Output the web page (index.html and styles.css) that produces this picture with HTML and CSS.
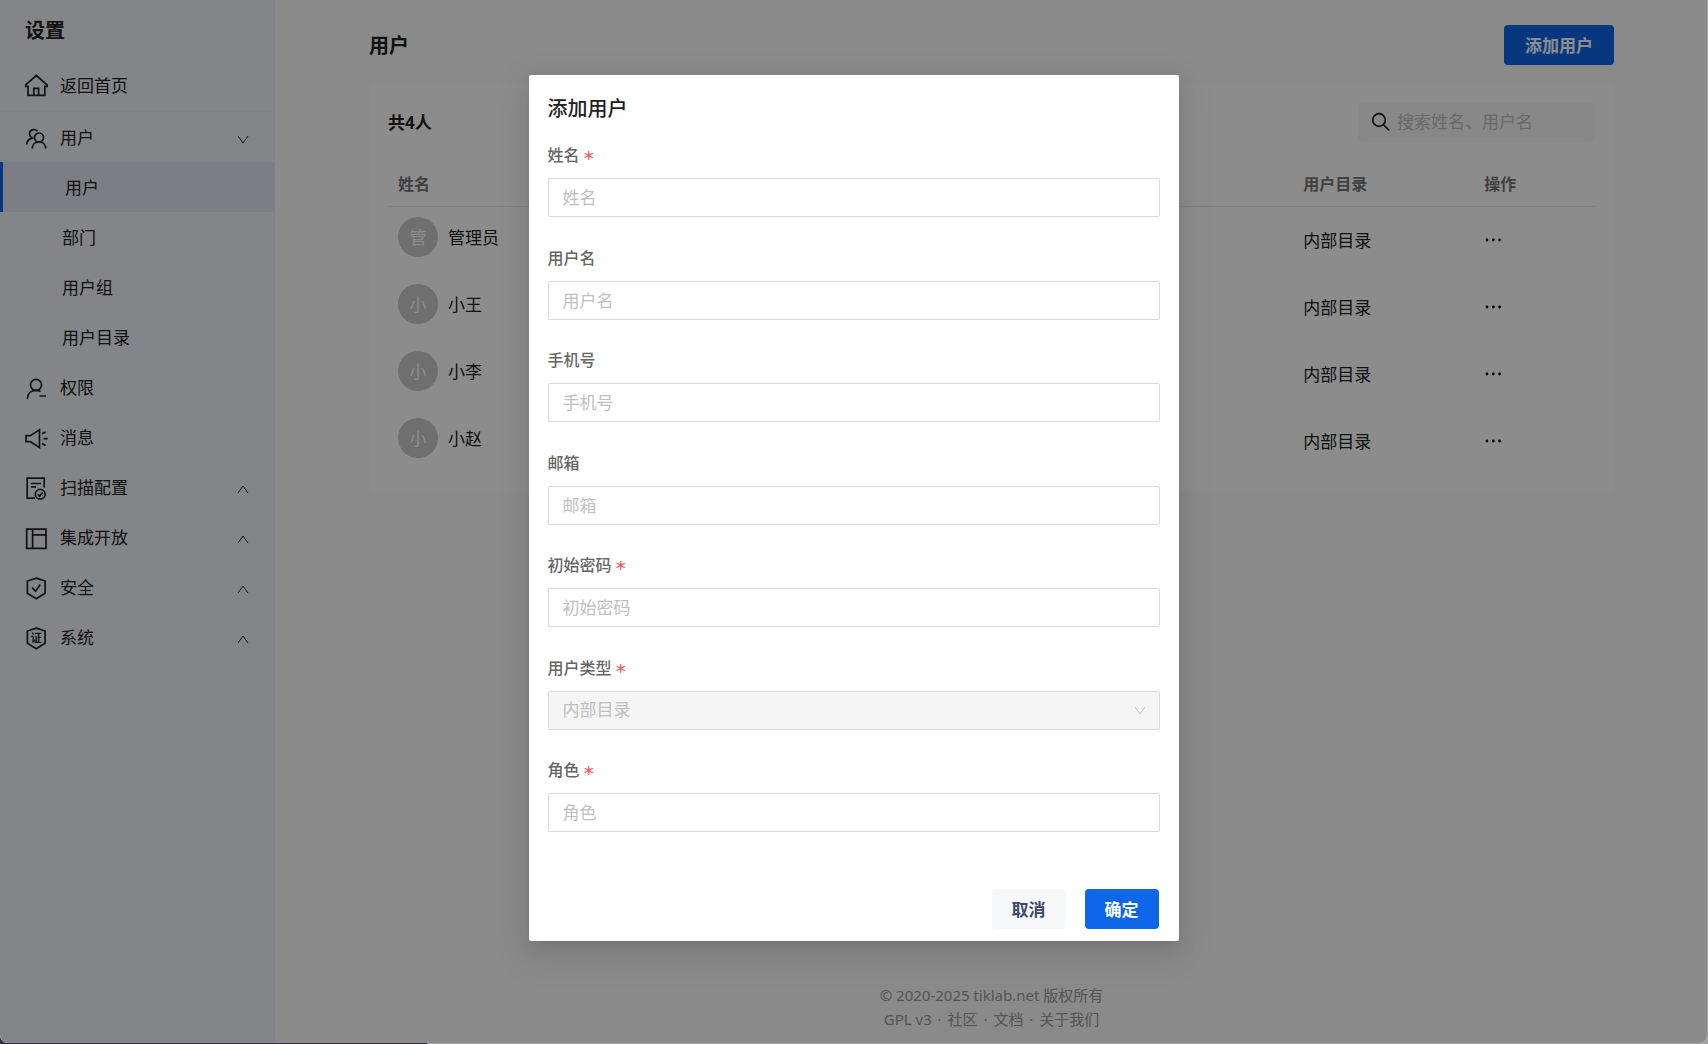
FILE: index.html
```html
<!DOCTYPE html>
<html lang="zh-CN">
<head>
<meta charset="utf-8">
<meta name="viewport" content="width=device-width, initial-scale=1">
<title>用户 - 设置</title>
<link rel="stylesheet" href="styles.css">
</head>
<body>
<svg class="sprite" aria-hidden="true">
  <symbol id="chevron-down" viewBox="0 0 12 12"><path d="M1 3l5 7 5-7"/></symbol>
  <symbol id="chevron-up" viewBox="0 0 12 12"><path d="M1 10l5-7 5 7"/></symbol>
  <symbol id="dots" viewBox="0 0 18 6"><circle cx="3" cy="3" r="1.4"/><circle cx="9.3" cy="3" r="1.4"/><circle cx="15.6" cy="3" r="1.4"/></symbol>
</svg>
<div class="app">
  <aside class="sidebar">
    <h2 class="sidebar-title">设置</h2>
    <nav>
      <a class="menu-item menu-home" href="#">
        <svg class="icon" viewBox="0 0 24 24"><path d="M4 21.400V12.400H1.700v-1.500L12.300 1.500l10.800 9.400v1.500h-2.300v9zM9.800 21.400v-7h4.800v7"/></svg>
        <span>返回首页</span>
      </a>
      <a class="menu-item" href="#">
        <svg class="icon" viewBox="0 0 24 24"><circle cx="15" cy="11.500" r="4.500"/><path d="M8.300 22.500c0-3.800 2.700-6.500 6.700-6.500s6.700 2.700 6.700 6.500M13.400 5.300C12.600 4 11 3.300 9.300 3.600 6.800 4 5.300 6.100 5.600 8.500c.2 1.700 1.200 2.900 2.700 3.600C4.800 13 2.800 15.200 2.700 18.500"/></svg>
        <span>用户</span>
        <svg class="chevron"><use href="#chevron-down"/></svg>
      </a>
      <a class="menu-item submenu-item active" href="#">用户</a>
      <a class="menu-item submenu-item" href="#">部门</a>
      <a class="menu-item submenu-item" href="#">用户组</a>
      <a class="menu-item submenu-item" href="#">用户目录</a>
      <a class="menu-item" href="#">
        <svg class="icon" viewBox="0 0 24 24"><circle cx="12" cy="8.900" r="5.500"/><path d="M3.400 22.700c.2-5 3.600-8.300 8.600-8.300 1.800 0 3.300.4 4.600 1.200M15.500 20H22"/></svg>
        <span>权限</span>
      </a>
      <a class="menu-item" href="#">
        <svg class="icon" viewBox="0 0 24 24"><path d="M2 9.600h4.300l9.200-5.700v17.500l-9.200-5.700H2zM18 7.800l3.600-1.900M19.500 12.700h4.200M18 17.400l3.600 2.100"/></svg>
        <span>消息</span>
      </a>
      <a class="menu-item" href="#">
        <svg class="icon" viewBox="0 0 24 24"><path d="M20.200 11.500V2.200H3.200v20h7.800M6.900 7.500h10.200M6.900 10.900h5.200"/><circle cx="16.200" cy="18.200" r="4.900"/><path d="M13.900 18.300l1.800 1.900 2.900-3.700"/></svg>
        <span>扫描配置</span>
        <svg class="chevron"><use href="#chevron-up"/></svg>
      </a>
      <a class="menu-item" href="#">
        <svg class="icon" viewBox="0 0 24 24"><path d="M2.700 3.200h19.300v19.100H2.700zM8.600 3.200v19.100M8.600 8.900H22"/></svg>
        <span>集成开放</span>
        <svg class="chevron"><use href="#chevron-up"/></svg>
      </a>
      <a class="menu-item" href="#">
        <svg class="icon" viewBox="0 0 24 24"><path d="M12.200 2.100l8.900 2.900v12.200l-8.900 5.500-8.800-5.500V5zM8.200 11.600l3.300 3.600 4.800-6.600"/></svg>
        <span>安全</span>
        <svg class="chevron"><use href="#chevron-up"/></svg>
      </a>
      <a class="menu-item" href="#">
        <svg class="icon" viewBox="0 0 24 24"><path d="M12.200 2.100l8.900 2.900v12.200l-8.900 5.500-8.800-5.500V5z"/><text class="icon-text" x="12.200" y="16">证</text></svg>
        <span>系统</span>
        <svg class="chevron"><use href="#chevron-up"/></svg>
      </a>
    </nav>
  </aside>

  <main class="main">
    <header class="page-header">
      <h1 class="page-title">用户</h1>
      <button class="button button-primary" type="button">添加用户</button>
    </header>
    <section class="card">
      <div class="card-bar">
        <strong class="count">共4人</strong>
        <label class="search">
          <svg class="search-icon" viewBox="0 0 20 20"><circle cx="8" cy="8" r="6.300"/><path d="M12.500 12.700l5.800 5.800"/></svg>
          <input class="search-input" type="text" placeholder="搜索姓名、用户名" aria-label="搜索姓名、用户名">
        </label>
      </div>
      <table class="users">
        <thead>
          <tr><th class="col-name">姓名</th><th class="col-dir">用户目录</th><th class="col-action">操作</th></tr>
        </thead>
        <tbody>
          <tr><td><div class="person"><span class="avatar">管</span>管理员</div></td><td>内部目录</td><td><button class="more" type="button" aria-label="操作"><svg><use href="#dots"/></svg></button></td></tr>
          <tr><td><div class="person"><span class="avatar">小</span>小王</div></td><td>内部目录</td><td><button class="more" type="button" aria-label="操作"><svg><use href="#dots"/></svg></button></td></tr>
          <tr><td><div class="person"><span class="avatar">小</span>小李</div></td><td>内部目录</td><td><button class="more" type="button" aria-label="操作"><svg><use href="#dots"/></svg></button></td></tr>
          <tr><td><div class="person"><span class="avatar">小</span>小赵</div></td><td>内部目录</td><td><button class="more" type="button" aria-label="操作"><svg><use href="#dots"/></svg></button></td></tr>
        </tbody>
      </table>
    </section>
    <footer class="footer">
      <div>© 2020-2025 tiklab.net 版权所有</div>
      <div class="footer-links"><a href="#">GPL v3</a> · <a href="#">社区</a> · <a href="#">文档</a> · <a href="#">关于我们</a></div>
    </footer>
  </main>

  <div class="mask">
    <div class="modal" role="dialog" aria-modal="true" aria-labelledby="modal-title">
      <h2 class="modal-title" id="modal-title">添加用户</h2>
      <form class="form" id="user-form">
        <div class="field"><label for="name">姓名 <span class="required">*</span></label><input class="control" id="name" type="text" placeholder="姓名"></div>
        <div class="field"><label for="account">用户名</label><input class="control" id="account" type="text" placeholder="用户名"></div>
        <div class="field"><label for="phone">手机号</label><input class="control" id="phone" type="text" placeholder="手机号"></div>
        <div class="field"><label for="mail">邮箱</label><input class="control" id="mail" type="text" placeholder="邮箱"></div>
        <div class="field"><label for="password">初始密码 <span class="required">*</span></label><input class="control" id="password" type="password" placeholder="初始密码"></div>
        <div class="field"><label for="type">用户类型 <span class="required">*</span></label>
          <div class="select"><select class="control" id="type" disabled><option>内部目录</option></select><svg class="chevron"><use href="#chevron-down"/></svg></div>
        </div>
        <div class="field"><label for="role">角色 <span class="required">*</span></label><input class="control" id="role" type="text" placeholder="角色"></div>
      </form>
      <div class="modal-footer">
        <button class="button button-plain" type="button">取消</button>
        <button class="button button-primary" type="submit" form="user-form">确定</button>
      </div>
    </div>
  </div>
</div>
</body>
</html>
```
FILE: styles.css
```css
* { box-sizing: border-box; }

html {
  background: linear-gradient(to right, #352f47 25%, #a3a5a4 25%);
}

body {
  margin: 0;
  padding: 0 1px 1px 0;
  font-family: "Noto Sans", "Noto Sans CJK SC", sans-serif;
  font-size: 17px;
  line-height: 26px;
  color: #212121;
}

h1, h2 { margin: 0; }
a { color: inherit; text-decoration: none; }
button, input, select { font: inherit; color: inherit; }
button { cursor: pointer; }

.sprite { position: absolute; width: 0; height: 0; }

.app {
  position: relative;
  display: flex;
  min-height: calc(100vh - 1px);
  overflow: hidden;
  border-radius: 0 0 8px 8px;
  background: #f9fcf9;
}

/* Sidebar */
.sidebar {
  flex: 0 0 275px;
  background: #f0f2f8;
  border-right: 1px solid #eaecf2;
}
.sidebar-title {
  padding: 2px 25px 0;
  font-size: 20px;
  font-weight: 700;
  line-height: 58px;
}
.menu-item {
  display: flex;
  align-items: center;
  gap: 12px;
  height: 50px;
  padding: 1px 25px 0 24px;
}
.menu-home {
  height: 52px;
  padding-top: 0;
  border-bottom: 1px solid #eaecf2;
}
.submenu-item { padding-left: 62px; }
.active {
  background: #e4e5ee;
  border-left: 3px solid #0d67e8;
}
.icon {
  width: 24px;
  height: 24px;
  fill: none;
  stroke: #212121;
  stroke-width: 1.7;
}
.icon-text {
  fill: #212121;
  stroke: none;
  font-size: 11px;
  font-weight: 700;
  text-anchor: middle;
}
.chevron {
  width: 12px;
  height: 12px;
  margin-left: auto;
  fill: none;
  stroke: currentColor;
}
.menu-item .chevron { margin-top: 2px; }

/* Page */
.main {
  flex: 1;
  display: flex;
  flex-direction: column;
  padding: 25px 93px 12px 94px;
}
.page-header {
  display: flex;
  align-items: center;
  justify-content: space-between;
  margin-bottom: 18px;
}
.page-header .button { min-width: 110px; }
.page-title { padding-top: 2px; font-size: 20px; }

.button {
  height: 40px;
  padding: 2px 20px 0;
  border: 0;
  border-radius: 4px;
  font-weight: 700;
}
.button-primary { background: #0d67e8; color: #fff; }
.button-plain { background: #f7f8fa; color: #3c4a69; }

.card {
  padding: 19px 19px 17px;
  border-radius: 6px;
  background: #fff;
}
.card-bar {
  display: flex;
  align-items: center;
  justify-content: space-between;
  margin-bottom: 20px;
}
.count { padding-top: 2px; }
.search {
  display: flex;
  align-items: center;
  gap: 6px;
  width: 237px;
  height: 40px;
  padding: 0 13px;
  border-radius: 6px;
  background: #f8f8f8;
}
.search-icon {
  flex: none;
  width: 20px;
  height: 20px;
  fill: none;
  stroke: #212121;
  stroke-width: 1.7;
}
.search-input {
  flex: 1;
  min-width: 0;
  padding: 0;
  border: 0;
  background: none;
}
::placeholder { color: #bfbfbf; opacity: 1; }

.users {
  width: 100%;
  table-layout: fixed;
  border-collapse: separate;
  border-spacing: 0;
}
.users th {
  height: 45px;
  padding: 0 10px;
  border-bottom: 1px solid #ececec;
  font-size: 16px;
  text-align: left;
  color: #767676;
}
.users td {
  height: 67px;
  padding: 10px 10px 9px;
  line-height: 48px;
  vertical-align: top;
}
.col-name { width: 75%; }
.col-dir { width: 15%; }
.col-action { width: 10%; }
.person {
  display: flex;
  gap: 10px;
  line-height: 42px;
}
.avatar {
  width: 40px;
  height: 40px;
  border-radius: 50%;
  background: #cbcbcb;
  color: #fff;
  text-align: center;
}
.more {
  display: flex;
  align-items: center;
  height: 46px;
  padding: 0;
  border: 0;
  background: none;
}
.more svg { width: 18px; height: 6px; }

.footer {
  margin-top: auto;
  font-size: 15px;
  line-height: 24px;
  text-align: center;
  color: #999;
}
.footer-links a { margin: 0 2px; }

/* Dialog */
.mask {
  position: absolute;
  inset: 0;
  padding: 75px 0;
  background: rgba(0, 0, 0, 0.45);
}
.modal {
  width: 650px;
  max-width: 100%;
  margin: 0 auto;
  border-radius: 2px;
  background: #fff;
  box-shadow: 0 4px 8px -5px rgba(0, 0, 0, 0.12), 0 8px 20px rgba(0, 0, 0, 0.08), 0 12px 35px 10px rgba(0, 0, 0, 0.05);
}
.modal-title {
  padding: 20px 19px;
  font-size: 20px;
  font-weight: 500;
  line-height: 27px;
}
.form {
  display: grid;
  min-height: 718px;
  padding: 0 19px;
}
.field {
  display: flex;
  flex-direction: column;
  gap: 10px;
}
.field label {
  height: 26px;
  font-size: 16px;
  font-weight: 500;
  color: #666;
}
.required {
  font-family: "DejaVu Sans", sans-serif;
  font-size: 20px;
  font-weight: 400;
  line-height: 1;
  vertical-align: sub;
  color: #ff4d4f;
}
.control {
  width: 100%;
  height: 39px;
  padding: 0 14px;
  border: 1px solid #d9d9d9;
  border-radius: 2px;
  background: #fff;
}
.select { display: grid; align-items: center; }
.select > * { grid-area: 1 / 1; }
.select .control {
  appearance: none;
  background: #f5f5f5;
  color: #bfbfbf;
  opacity: 1;
}
.select .chevron { margin-right: 14px; color: #bfbfbf; }
.modal-footer {
  display: flex;
  justify-content: flex-end;
  gap: 19px;
  padding: 29px 20px 12px;
}
```
